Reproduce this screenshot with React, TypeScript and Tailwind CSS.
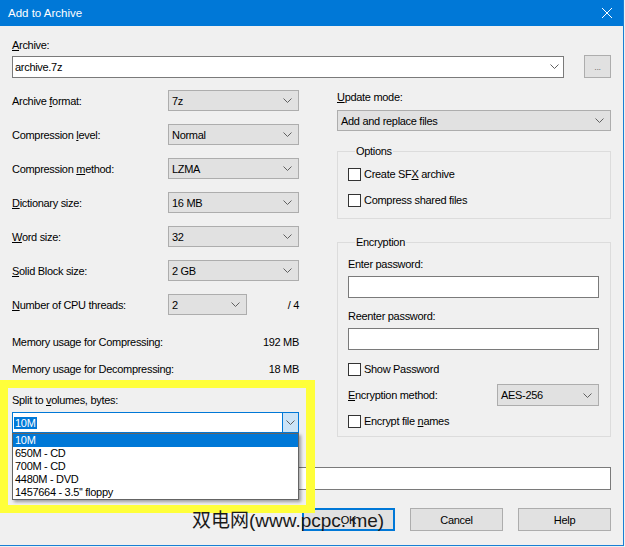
import React from "react";

function Chevron() {
  return (
    <svg width="9" height="5" viewBox="0 0 9 5" className="shrink-0">
      <path d="M0.5 0.5 L4.5 4.5 L8.5 0.5" fill="none" stroke="#606060" strokeWidth="1" />
    </svg>
  );
}

function Combo({ value, className }: { value: string; className?: string }) {
  return (
    <div
      className={`flex items-center justify-between h-[21px] bg-[#e1e1e1] border border-[#adadad] pl-[3px] pr-[6px] ${className ?? ""}`}
    >
      <span>{value}</span>
      <Chevron />
    </div>
  );
}

function Check({ children }: { children: React.ReactNode }) {
  return (
    <div className="flex items-center h-[14px] gap-[3px]">
      <div className="w-[13px] h-[13px] bg-white border border-[#333333] shrink-0" />
      <span>{children}</span>
    </div>
  );
}

function Row({ label, value }: { label: React.ReactNode; value: string }) {
  return (
    <div className="grid grid-cols-[156px_131px] items-center">
      <span>{label}</span>
      <Combo value={value} />
    </div>
  );
}

const volumes = ["10M", "650M - CD", "700M - CD", "4480M - DVD", "1457664 - 3.5'' floppy"];

export default function App() {
  return (
    <div className="relative w-[625px] h-[547px] overflow-hidden bg-[#f0f0f0] text-black text-[11px] leading-[14px] tracking-[-0.3px] font-['Liberation_Sans',sans-serif]">
      <div className="flex flex-col w-[624px] h-[546px] border-r border-b border-[#1a7fd4]">
        {/* title bar */}
        <div className="flex items-center justify-between h-[26px] bg-[#0078d7] pl-[8px] pr-[11px] text-white text-[11.5px] tracking-normal">
          <span>Add to Archive</span>
          <svg width="10" height="10" viewBox="0 0 10 10">
            <path d="M0 0 L10 10 M10 0 L0 10" stroke="#ffffff" strokeWidth="1" />
          </svg>
        </div>

        <div className="flex flex-col pl-[12px] pr-[12px]">
          {/* archive */}
          <div className="mt-[12px]">
            <u>A</u>rchive:
          </div>
          <div className="flex items-center gap-[20px] mt-[3px]">
            <div className="flex-1 flex items-center justify-between h-[22px] bg-white border border-[#7a7a7a] pl-[2px] pr-[4px]">
              <span>archive.7z</span>
              <Chevron />
            </div>
            <div className="w-[27px] h-[23px] flex items-center justify-center bg-[#e1e1e1] border border-[#adadad] text-[#777] text-[9px]">
              ...
            </div>
          </div>

          {/* columns */}
          <div className="flex gap-[38px] mt-[12px]">
            {/* left */}
            <div className="w-[287px] flex flex-col">
              <div className="flex flex-col gap-[13px]">
                <Row label={<>Archive <u>f</u>ormat:</>} value="7z" />
                <Row label={<>Compression <u>l</u>evel:</>} value="Normal" />
                <Row label={<>Compression <u>m</u>ethod:</>} value="LZMA" />
                <Row label={<><u>D</u>ictionary size:</>} value="16 MB" />
                <Row label={<><u>W</u>ord size:</>} value="32" />
                <Row label={<><u>S</u>olid Block size:</>} value="2 GB" />
                <div className="flex items-center">
                  <span className="w-[156px]">
                    <u>N</u>umber of CPU threads:
                  </span>
                  <Combo value="2" className="w-[79px]" />
                  <span className="flex-1 text-right">/ 4</span>
                </div>
              </div>
              <div className="flex justify-between mt-[20px]">
                <span>Memory usage for Compressing:</span>
                <span>192 MB</span>
              </div>
              <div className="flex justify-between mt-[13px]">
                <span>Memory usage for Decompressing:</span>
                <span>18 MB</span>
              </div>
              <div className="mt-[17px]">
                Split to <u>v</u>olumes, bytes:
              </div>
              <div className="relative mt-[5px]">
                <div className="flex items-center h-[21px] bg-white border border-[#0078d7]">
                  <div className="flex-1 pl-[1px]">
                    <span className="bg-[#0078d7] text-white px-[1px]">10M</span>
                  </div>
                  <div className="w-[16px] h-full flex items-center justify-center bg-[#cce4f7] border-l border-[#0078d7]">
                    <Chevron />
                  </div>
                </div>
                {/* open list */}
                <div className="absolute left-0 top-full w-[287px] bg-white border border-[#646464] shadow-[2px_2px_3px_rgba(0,0,0,0.35)] z-10">
                  {volumes.map((v, i) => (
                    <div
                      key={v}
                      className={`h-[13px] leading-[13px] pl-[2px] ${i === 0 ? "bg-[#0078d7] text-white" : ""}`}
                    >
                      {v}
                    </div>
                  ))}
                </div>
              </div>
            </div>

            {/* right */}
            <div className="flex-1 flex flex-col">
              <div>
                <u>U</u>pdate mode:
              </div>
              <Combo value="Add and replace files" className="mt-[6px]" />

              <fieldset className="mt-[13px] border border-[#dcdcdc] pl-[10px] pb-[11px]">
                <legend className="ml-[7px] px-[1px]">Options</legend>
                <div className="flex flex-col gap-[12px] pt-[9px]">
                  <Check>
                    Create SF<u>X</u> archive
                  </Check>
                  <Check>Compress shared files</Check>
                </div>
              </fieldset>

              <fieldset className="mt-[16px] border border-[#dcdcdc] pl-[10px] pr-[11px] pb-[8px]">
                <legend className="ml-[7px] px-[1px]">Encryption</legend>
                <div className="flex flex-col pt-[8px]">
                  <div>Enter password:</div>
                  <div className="h-[22px] mt-[5px] bg-white border border-[#7a7a7a]" />
                  <div className="mt-[11px]">Reenter password:</div>
                  <div className="h-[22px] mt-[5px] bg-white border border-[#7a7a7a]" />
                  <div className="mt-[12px]">
                    <Check>Show Password</Check>
                  </div>
                  <div className="flex items-center justify-between mt-[8px]">
                    <span>
                      <u>E</u>ncryption method:
                    </span>
                    <Combo value="AES-256" className="w-[102px] h-[22px]" />
                  </div>
                  <div className="mt-[8px]">
                    <Check>
                      Encrypt file <u>n</u>ames
                    </Check>
                  </div>
                </div>
              </fieldset>
            </div>
          </div>

          {/* parameters (its label sits under the open list) */}
          <div className="h-[23px] mt-[30px] bg-white border border-[#7a7a7a]" />

          {/* buttons */}
          <div className="flex justify-end gap-[15px] mt-[18px]">
            <div className="w-[93px] h-[23px] flex items-center justify-center bg-[#e1e1e1] border-2 border-[#0078d7]">
              OK
            </div>
            <div className="w-[93px] h-[23px] flex items-center justify-center bg-[#e1e1e1] border border-[#adadad]">
              Cancel
            </div>
            <div className="w-[93px] h-[23px] flex items-center justify-center bg-[#e1e1e1] border border-[#adadad]">
              Help
            </div>
          </div>
        </div>
      </div>

      {/* yellow highlight annotation */}
      <div className="absolute left-0 top-[380px] w-[315px] h-[133px] border-t-[8px] border-l-[8px] border-b-[8px] border-r-[9px] border-[#ffff3a] z-20 pointer-events-none" />

      {/* watermark */}
      <div className="absolute left-[192px] top-[508px] z-30 text-[19px] leading-[26px] tracking-normal text-[#1a1a1a] font-['Liberation_Sans','Noto_Sans_CJK_SC',sans-serif]">
        双电网(www.pcpc. me)
      </div>
    </div>
  );
}
